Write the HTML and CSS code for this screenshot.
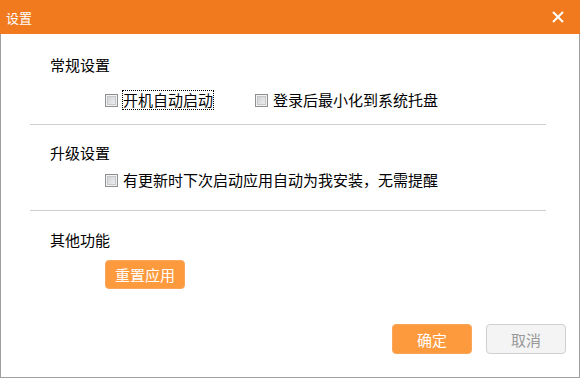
FILE: index.html
```html
<!DOCTYPE html>
<html>
<head>
    <meta charset="utf-8">
    <title>设置</title>
    <link rel="stylesheet" href="styles.css">
</head>
<body>
    <div class="dialog">
        <!-- Title bar -->
        <div class="titlebar">
            <span class="title">设置</span>
            <span class="close" aria-label="关闭">
                <svg width="12" height="12" viewBox="0 0 12 12">
                    <path d="M1 1 L11 11 M11 1 L1 11" stroke="#fff" stroke-width="2" fill="none"/>
                </svg>
            </span>
        </div>

        <div class="content">
            <!-- General -->
            <div class="group group-general">
                <div class="group-title">常规设置</div>
                <div class="options">
                    <label class="option"><span class="check"></span><span class="text focused">开机自动启动</span></label>
                    <label class="option"><span class="check"></span><span class="text">登录后最小化到系统托盘</span></label>
                </div>
            </div>
            <div class="divider"></div>

            <!-- Upgrade -->
            <div class="group group-upgrade">
                <div class="group-title">升级设置</div>
                <div class="options">
                    <label class="option"><span class="check"></span><span class="text">有更新时下次启动应用自动为我安装，无需提醒</span></label>
                </div>
            </div>
            <div class="divider"></div>

            <!-- Other -->
            <div class="group group-other">
                <div class="group-title">其他功能</div>
                <div class="options">
                    <button class="btn btn-primary">重置应用</button>
                </div>
            </div>

            <div class="footer">
                <button class="btn btn-primary">确定</button>
                <button class="btn btn-default">取消</button>
            </div>
        </div>
    </div>
</body>
</html>
```

FILE: styles.css
```css
body {
    margin: 0;
    padding: 0;
    background: #fff;
    font-family: "Noto Sans CJK SC", "Microsoft YaHei", sans-serif;
    font-size: 15px;
    color: #000;
}

.dialog {
    width: 580px;
    height: 378px;
    box-sizing: border-box;
    border: 1px solid #a0a0a0;
    border-top: none;
    background: #fff;
}

/* Title bar */
.titlebar {
    height: 34px;
    margin: 0 -1px;
    background: #f17a1f;
    display: flex;
    align-items: center;
    justify-content: space-between;
    padding: 2px 16px 0 6px;
    box-sizing: border-box;
    color: #fff;
}
.title {
    font-size: 13px;
    line-height: 16px;
}
.close {
    display: flex;
    margin-top: -3px;
}

/* Content */
.content {
    padding: 0 33px 0 29px;
}
.group-title {
    padding-left: 20px;
    line-height: 20px;
}
.options {
    padding-left: 75px;
    display: flex;
    align-items: center;
    gap: 41px;
}
.option {
    display: flex;
    align-items: center;
    gap: 4px;
    line-height: 20px;
}
.check {
    width: 13px;
    height: 13px;
    box-sizing: border-box;
    border: 1px solid #8e8f8f;
    background: linear-gradient(135deg, #c9cbcd, #f4f4f4);
    box-shadow: inset 0 0 0 1px #f2f2f2, inset 0 0 0 2px #c5c7ca;
}
.text {
    padding: 0 1px;
}
.text.focused {
    outline: 1px dotted #000;
    outline-offset: -1px;
    padding: 1px 1px;
    line-height: 18px;
}

.group-general {
    padding: 21px 0 14px;
}
.group-general .options {
    margin-top: 15px;
}
.group-upgrade {
    padding: 18px 0 20px;
}
.group-upgrade .options {
    margin-top: 7px;
}
.group-other {
    padding: 19px 0 0;
}
.group-other .options {
    margin-top: 10px;
}

.divider {
    height: 1px;
    background: #cfcfcf;
}

/* Buttons */
.btn {
    width: 80px;
    height: 29px;
    border-radius: 4px;
    font-family: inherit;
    font-size: 15px;
    padding: 0;
    cursor: pointer;
}
.btn-primary {
    background: #fe9a3e;
    border: 1px solid #f9a55a;
    color: #fff;
}
.btn-default {
    background: #f4f4f4;
    border: 1px solid #d0d0d0;
    color: #999;
}

.footer {
    display: flex;
    justify-content: flex-end;
    gap: 14px;
    margin: 35px -20px 0 0;
}
.footer .btn {
    height: 30px;
}
```
